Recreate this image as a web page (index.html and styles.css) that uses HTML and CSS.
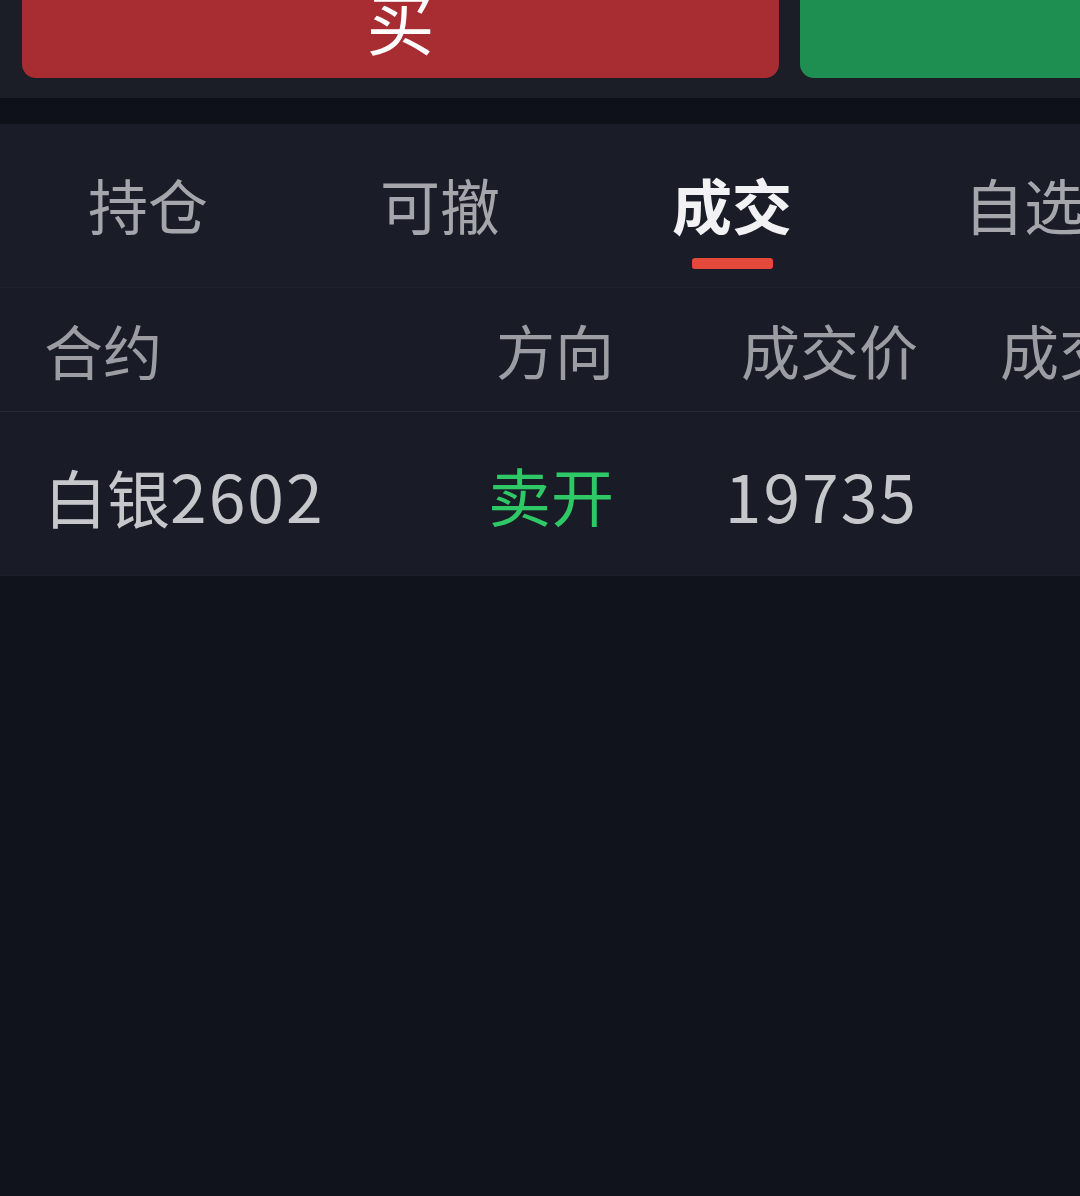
FILE: index.html
```html
<!DOCTYPE html>
<html lang="zh-CN">
<head>
    <meta charset="UTF-8">
    <meta name="viewport" content="width=device-width, initial-scale=1.0">
    <title>成交</title>
    <link rel="stylesheet" href="styles.css">
</head>
<body>
    <div class="order-bar">
        <div class="order-btn buy">买</div>
        <div class="order-btn sell"></div>
    </div>

    <div class="spacer"></div>

    <div class="tabs">
        <div class="tab">持仓</div>
        <div class="tab">可撤</div>
        <div class="tab active">成交</div>
        <div class="tab">自选</div>
    </div>

    <div class="table">
        <div class="row head">
            <div class="cell name">合约</div>
            <div class="cell dir">方向</div>
            <div class="cell price">成交价</div>
            <div class="cell qty">成交量</div>
        </div>
        <div class="row">
            <div class="cell name">白银<span class="num">2602</span></div>
            <div class="cell dir sell-text">卖开</div>
            <div class="cell price num">19735</div>
            <div class="cell qty"></div>
        </div>
    </div>
</body>
</html>
```

FILE: styles.css
```css
html, body {
    margin: 0;
    padding: 0;
}

body {
    background-color: #10131c;
    font-family: "Noto Sans CJK SC", "Noto Sans", sans-serif;
    color: #c6c7cb;
    width: 1080px;
    height: 1196px;
    overflow: hidden;
}

/* buy / sell buttons, top is cut off by the screen edge */
.order-bar {
    background-color: #1b1e27;
    height: 98px;
    display: flex;
    align-items: flex-end;
    gap: 21px;
    padding: 0 0 20px 22px;
    box-sizing: border-box;
    overflow: hidden;
}

.order-btn {
    flex-shrink: 0;
    height: 140px;
    border-radius: 14px;
    color: #ffffff;
    font-size: 68px;
    display: flex;
    justify-content: center;
    align-items: flex-end;
    padding-bottom: 23px;
    box-sizing: border-box;
    line-height: 1;
}

.buy {
    width: 757px;
    background-color: #a82d33;
}

.sell {
    width: 400px;
    background-color: #1f8f51;
}

.spacer {
    height: 26px;
    background-color: #0e1119;
}

.tabs {
    background-color: #1a1d27;
    height: 164px;
    display: flex;
    padding-left: 2px;
    border-bottom: 1px solid #1e222c;
    box-sizing: border-box;
    overflow: hidden;
}

.tab {
    flex-shrink: 0;
    width: 292px;
    text-align: center;
    font-size: 60px;
    color: #a4a6ab;
    padding-top: 41px;
    line-height: 78px;
    position: relative;
}

.tab.active {
    color: #f2f2f4;
    font-weight: bold;
}

.tab.active::after {
    content: "";
    position: absolute;
    left: 106px;
    top: 134px;
    width: 81px;
    height: 11px;
    border-radius: 3px;
    background-color: #e5493b;
}

.table {
    background-color: #191c26;
}

.row {
    display: grid;
    grid-template-columns: 400px 170px 304px 1fr;
    padding-left: 44px;
    height: 163px;
    align-items: center;
    border-bottom: 1px solid #262a34;
    white-space: nowrap;
    overflow: hidden;
}

.row.head {
    height: 123px;
    color: #9b9da3;
}

.row:last-child {
    border-bottom-color: #1c1f29;
}

.cell {
    font-size: 63px;
}

.row.head .cell {
    font-size: 59px;
}

.dir {
    text-align: right;
}

.price {
    text-align: right;
}

.qty {
    padding-left: 82px;
}

.num {
    letter-spacing: 2px;
    font-size: 66px;
}

.sell-text {
    color: #2ec866;
}
```
